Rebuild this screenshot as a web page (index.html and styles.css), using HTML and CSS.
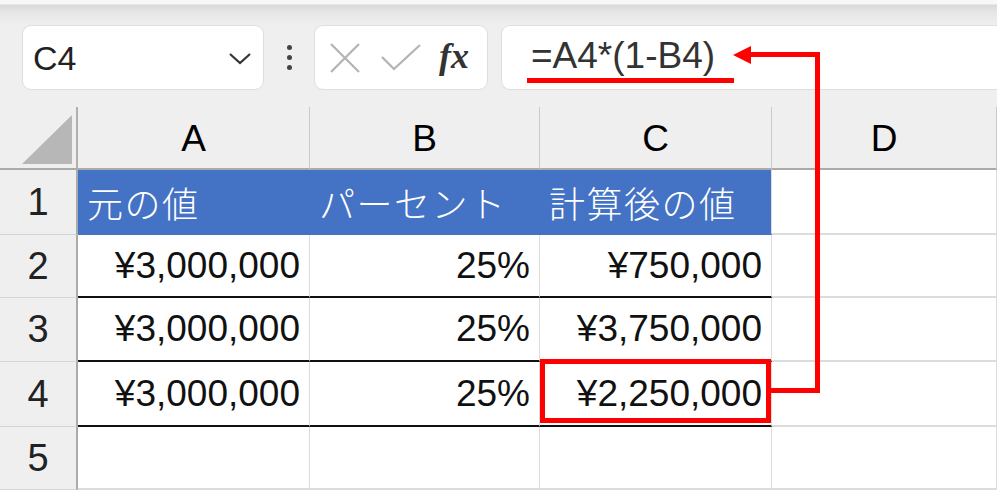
FILE: index.html
```html
<!DOCTYPE html>
<html lang="ja">
<head>
<meta charset="utf-8">
<title>Excel</title>
<link rel="stylesheet" href="styles.css">
</head>
<body>
<div class="app">
  <div class="topband"></div>
  <div class="fbar">
    <div class="namebox">
      <span class="cellref">C4</span>
      <svg class="chev" width="24" height="14" viewBox="0 0 24 14"><path d="M2 2 L12 11 L22 2" fill="none" stroke="#333" stroke-width="2.2"/></svg>
    </div>
    <div class="dots"><i></i><i></i><i></i></div>
    <div class="fxbox">
      <svg width="32" height="32" viewBox="0 0 32 32"><path d="M2 2 L30 30 M30 2 L2 30" stroke="#b3b3b3" stroke-width="2.2" fill="none"/></svg>
      <svg width="40" height="28" viewBox="0 0 40 28"><path d="M1 13 L13 25 L39 1" stroke="#b3b3b3" stroke-width="2.2" fill="none"/></svg>
      <span class="fx">fx</span>
    </div>
    <div class="formula"><span class="ftext">=A4*(1-B4)</span></div>
  </div>
  <div class="band"></div>
  <div class="grid">
    <div class="c corner"><div class="tri"></div></div>
    <div class="c ch">A</div>
    <div class="c ch">B</div>
    <div class="c ch">C</div>
    <div class="c ch">D</div>

    <div class="c rh">1</div>
    <div class="c hd">元の値</div>
    <div class="c hd">パーセント</div>
    <div class="c hd last">計算後の値</div>
    <div class="c"></div>

    <div class="c rh">2</div>
    <div class="c tb">¥3,000,000</div>
    <div class="c tb">25%</div>
    <div class="c tb">¥750,000</div>
    <div class="c"></div>

    <div class="c rh">3</div>
    <div class="c tb">¥3,000,000</div>
    <div class="c tb">25%</div>
    <div class="c tb">¥3,750,000</div>
    <div class="c"></div>

    <div class="c rh">4</div>
    <div class="c tb">¥3,000,000</div>
    <div class="c tb">25%</div>
    <div class="c tb">¥2,250,000</div>
    <div class="c"></div>

    <div class="c rh">5</div>
    <div class="c"></div>
    <div class="c"></div>
    <div class="c"></div>
    <div class="c"></div>
  </div>
  <svg class="overlay" width="1000" height="498" viewBox="0 0 1000 498">
    <rect x="527" y="78" width="207" height="5" fill="#ff0000"/>
    <polygon points="733,55 751,46 751,64" fill="#ff0000"/>
    <path d="M748 54.5 H817.5 V390.5 H770" fill="none" stroke="#ff0000" stroke-width="5"/>
    <rect x="542.5" y="361.5" width="226" height="59" fill="none" stroke="#ff0000" stroke-width="5"/>
  </svg>
</div>
</body>
</html>
```
FILE: styles.css
```css
html, body {
  margin: 0;
  padding: 0;
  background: #ffffff;
}
.app {
  position: relative;
  width: 997px;
  height: 498px;
  background: #ffffff;
  font-family: "Liberation Sans", "Noto Sans CJK JP", sans-serif;
}
.topband {
  height: 25px;
  background: linear-gradient(#f7f7f7 0, #f7f7f7 4px, #d9d9d9 5px, #e6e6e6 12px, #efefef 25px);
}
.fbar {
  display: flex;
  height: 65px;
  padding-left: 22px;
  background: #efefef;
}
.namebox {
  width: 242px;
  box-sizing: border-box;
  background: #fff;
  border: 1px solid #dedede;
  border-radius: 9px;
  display: flex;
  align-items: center;
  justify-content: space-between;
  padding: 0 11px 0 10px;
}
.cellref {
  font-size: 34px;
  color: #222;
  padding-top: 2px;
}
.chev {
  margin-top: 2px;
}
.dots {
  width: 50px;
  display: flex;
  flex-direction: column;
  align-items: center;
  justify-content: center;
  gap: 5px;
}
.dots i {
  display: block;
  width: 5px;
  height: 5px;
  border-radius: 50%;
  background: #444;
}
.fxbox {
  width: 174px;
  box-sizing: border-box;
  background: #fff;
  border: 1px solid #dedede;
  border-radius: 9px;
  display: flex;
  align-items: center;
  padding-left: 14px;
  gap: 22px;
}
.fxbox svg:nth-child(2) {
  margin-left: -2px;
}
.fx {
  font-family: "Liberation Serif", serif;
  font-style: italic;
  font-weight: bold;
  font-size: 36px;
  color: #333;
  margin-left: -4px;
  margin-top: -4px;
}
.formula {
  flex: 1;
  margin-left: 13px;
  background: #fff;
  border: 1px solid #dedede;
  border-right: none;
  border-radius: 9px 0 0 9px;
  display: flex;
  align-items: center;
  padding-left: 29px;
}
.ftext {
  font-size: 37px;
  color: #333;
  margin-top: -3px;
}
.band {
  height: 17px;
  background: #efefef;
}
.grid {
  display: grid;
  grid-template-columns: 78px 232px 230px 232px 225px;
  grid-template-rows: 63px 65px 63px 64px 65px 63px;
}
.c {
  box-sizing: border-box;
  border-right: 1px solid #dcdcdc;
  border-bottom: 2px solid #dcdcdc;
  display: flex;
  align-items: center;
  justify-content: flex-end;
  padding: 0 9px;
  font-size: 37px;
  color: #111;
  background: #fff;
}
.corner {
  background: #efefef;
  border-right: 2px solid #b0b0b0;
  border-bottom: 2px solid #aaaaaa;
  position: relative;
}
.tri {
  position: absolute;
  left: 22px;
  top: 8px;
  width: 50px;
  height: 49px;
  background: #b7b7b7;
  clip-path: polygon(100% 0, 100% 100%, 0 100%);
}
.ch {
  background: #efefef;
  border-right: 1px solid #cacaca;
  border-bottom: 2px solid #aaaaaa;
  justify-content: center;
  padding: 0;
  color: #000;
  padding-top: 2px;
}
.rh {
  background: #efefef;
  border-right: 2px solid #aaaaaa;
  border-bottom: 1px solid #d4d4d4;
  justify-content: center;
  padding: 0;
  color: #222;
  font-size: 38px;
}
.hd {
  background: #4472c4;
  color: #fff;
  border-right: 1px solid #4472c4;
  border-bottom: 2px solid #4472c4;
  justify-content: flex-start;
  padding-left: 9px;
  font-family: "Noto Sans CJK JP", sans-serif;
  font-weight: 300;
  font-size: 36px;
  letter-spacing: 1.5px;
}
.hd.last {
  border-right: 1px solid #dcdcdc;
}
.tb {
  border-bottom: 2px solid #111;
}
.overlay {
  position: absolute;
  left: 0;
  top: 0;
  pointer-events: none;
}
```
